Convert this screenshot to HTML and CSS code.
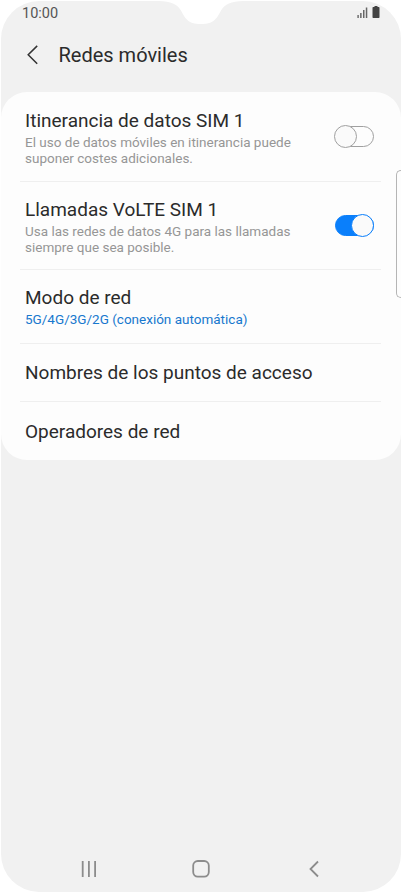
FILE: index.html
```html
<!DOCTYPE html>
<html lang="es">
<head>
  <meta charset="UTF-8">
  <meta name="viewport" content="width=device-width, initial-scale=1.0">
  <title>Redes móviles</title>
  <link rel="stylesheet" href="styles.css">
</head>
<body>
  <div class="screen">
    <svg class="notch" width="84" height="23" viewBox="0 0 84 23">
      <path d="M0 0 C12 .5 18 3 22 9.5 C26 17 28.5 23 42 23 C55.5 23 58 17 62 9.5 C66 3 72 .5 84 0 Z" fill="#fff"/>
    </svg>

    <div class="status">
      <span class="time">10:00</span>
      <svg width="24" height="13" viewBox="0 0 24 13">
        <path d="M.4 9h1.4v3H.4zM3.1 7h1.5v5H3.1zM6 4h1.5v8H6zM8.8 1.5h1.5V12H8.8z" fill="#666"/>
        <path d="M17.5 0h3v1h1.2q.8 0 .8.8v9.4q0 .8-.8.8h-5.4q-.8 0-.8-.8V1.8q0-.8.8-.8h1.2z" fill="#444"/>
      </svg>
    </div>

    <header class="header">
      <svg width="12" height="20" viewBox="0 0 12 20">
        <path d="M11.2 .9 L2.2 9.8 L11.2 18.7" fill="none" stroke="#333" stroke-width="1.5"/>
      </svg>
      <h1>Redes móviles</h1>
    </header>

    <main class="card">
      <div class="row roaming">
        <div>
          <h2>Itinerancia de datos SIM 1</h2>
          <p>El uso de datos móviles en itinerancia puede<br>suponer costes adicionales.</p>
        </div>
        <div class="toggle"></div>
      </div>
      <div class="row volte">
        <div>
          <h2>Llamadas VoLTE SIM 1</h2>
          <p>Usa las redes de datos 4G para las llamadas<br>siempre que sea posible.</p>
        </div>
        <div class="toggle on"></div>
      </div>
      <div class="row mode">
        <div>
          <h2>Modo de red</h2>
          <p class="value">5G/4G/3G/2G (conexión automática)</p>
        </div>
      </div>
      <div class="row apn">
        <h2>Nombres de los puntos de acceso</h2>
      </div>
      <div class="row operators">
        <h2>Operadores de red</h2>
      </div>
    </main>

    <div class="edge"></div>

    <nav class="navbar">
      <svg width="18" height="18" viewBox="0 0 18 18">
        <path d="M3.7 1v16M9.9 1v16M16.1 1v16" stroke="#8c8c8c" stroke-width="1.8"/>
      </svg>
      <svg width="18" height="18" viewBox="0 0 18 18">
        <rect x="1.2" y="1" width="15.6" height="15.6" rx="4.6" fill="none" stroke="#8c8c8c" stroke-width="1.8"/>
      </svg>
      <svg width="18" height="18" viewBox="0 0 18 18">
        <path d="M13 1.5L5.5 9L13 16.5" fill="none" stroke="#8c8c8c" stroke-width="1.8"/>
      </svg>
    </nav>
  </div>
</body>
</html>
```
FILE: styles.css
```css
*, *::after {
  box-sizing: border-box;
}

body {
  margin: 0;
  padding: 1px;
  background-color: #fff;
  font-family: Roboto, sans-serif;
  color: #2b2b2b;
}

h1, h2, p {
  margin: 0;
  font-weight: 400;
  white-space: nowrap;
}

.screen {
  position: relative;
  display: flex;
  flex-direction: column;
  width: 400px;
  height: 891px;
  overflow: hidden;
  border-radius: 38px;
  background-color: #f1f1f1;
}

.notch {
  position: absolute;
  top: 0;
  left: 158px;
}

.status {
  display: flex;
  justify-content: space-between;
  height: 24px;
  padding: 5px 20px 0 21px;
}

.time {
  font-size: 14.5px;
  line-height: 16px;
  color: #555;
}

.header {
  display: flex;
  align-items: center;
  gap: 20.5px;
  height: 67px;
  padding: 0 0 8px 25px;
}

.header h1 {
  font-size: 20px;
  line-height: 24px;
}

.card {
  border-radius: 26px;
  background-color: #fdfdfd;
}

.row {
  display: flex;
  justify-content: space-between;
  margin: 0 20px 0 19px;
  padding: 0 6px 0 5px;
  border-bottom: 1px solid #efefef;
}

.row h2 {
  font-size: 19px;
  line-height: 24px;
}

.row p {
  margin-top: 1px;
  font-size: 13.5px;
  line-height: 16px;
  color: #969696;
}

.row .value {
  color: #1878ce;
}

.roaming {
  height: 90px;
  padding-top: 17px;
}

.volte {
  height: 88px;
  padding-top: 16px;
}

.mode {
  height: 74px;
  padding-top: 16px;
}

.apn {
  height: 58px;
  padding-top: 17px;
}

.operators {
  height: 58px;
  padding-top: 18px;
  border-bottom: none;
}

.toggle {
  position: relative;
  width: 39px;
  height: 21px;
  margin: 17px 1px 0 0;
  border: 1px solid #a0a0a0;
  border-radius: 11px;
}

/* the knob is a little taller than the track */
.toggle::after {
  content: "";
  position: absolute;
  top: -2px;
  left: -2px;
  width: 23px;
  height: 23px;
  border: 1px solid #a0a0a0;
  border-radius: 50%;
  background-color: #fafafa;
}

.toggle.on {
  background-color: #0a7ffb;
  border-color: #0a7ffb;
}

.toggle.on::after {
  left: auto;
  right: -1px;
  border-color: #0a7ffb;
}

.edge {
  position: absolute;
  top: 169px;
  right: 0;
  width: 5px;
  height: 128px;
  border: 1.5px solid #b5b5b5;
  border-right: none;
  border-radius: 5px 0 0 5px;
}

.navbar {
  display: flex;
  justify-content: space-between;
  margin-top: auto;
  padding: 0 78px 14px 78px;
}
```
